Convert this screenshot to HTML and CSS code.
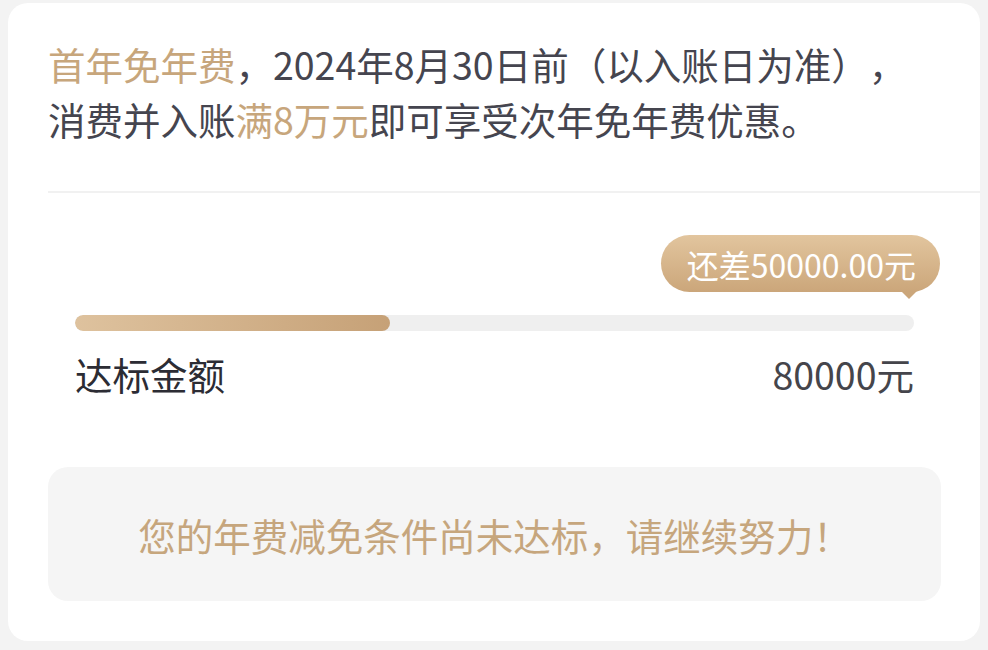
FILE: index.html
```html
<!DOCTYPE html>
<html lang="zh-CN">
<head>
<meta charset="utf-8">
<link rel="stylesheet" href="styles.css">
</head>
<body>
<div class="card">
  <div class="intro">
    <p class="intro-text"><span class="gold">首年免年费</span>，2024年8月30日前（以入账日为准），<br>消费并入账<span class="gold">满8万元</span>即可享受次年免年费优惠。</p>
  </div>
  <div class="progress">
    <div class="tip-row">
      <div class="tip">还差50000.00元</div>
    </div>
    <div class="track"><div class="fill" style="width:37.5%"></div></div>
    <div class="amount-row">
      <span class="label">达标金额</span>
      <span class="value">80000元</span>
    </div>
  </div>
  <div class="notice">您的年费减免条件尚未达标，请继续努力！</div>
</div>
</body>
</html>
```

FILE: styles.css
```css
* { box-sizing: border-box; }
html, body { margin: 0; padding: 0; }
body {
  background: #f3f3f3;
  font-family: "Noto Sans CJK SC", "Noto Sans", sans-serif;
  text-spacing-trim: space-all;
  width: 988px;
  height: 650px;
  padding: 3px 8px 0 8px;
}
.card {
  background: #ffffff;
  border-radius: 20px;
  width: 972px;
  height: 638px;
  padding-bottom: 40px;
  display: flex;
  flex-direction: column;
}
.intro {
  margin-left: 40px;
  padding-top: 33px;
  padding-bottom: 45px;
  border-bottom: 2px solid #f1f1f1;
}
.intro-text {
  margin: 0;
  font-size: 37.5px;
  line-height: 55px;
  color: #45454f;
}
.gold { color: #c7a67c; }
.progress {
  padding: 42px 66px 0 67px;
}
.tip-row {
  display: flex;
  justify-content: flex-end;
  margin-right: -26px;
}
.tip {
  position: relative;
  height: 57px;
  padding: 0 24px 0 26px;
  border-radius: 29px;
  background: linear-gradient(180deg, #e2c59e 0%, #cba67a 100%);
  color: #ffffff;
  font-size: 32px;
  display: flex;
  align-items: center;
}
.tip::after {
  content: "";
  position: absolute;
  right: 23px;
  bottom: -7px;
  border-left: 8px solid transparent;
  border-right: 8px solid transparent;
  border-top: 8px solid #cba67a;
}
.track {
  margin-top: 23px;
  height: 16px;
  border-radius: 8px;
  background: #efefef;
  overflow: hidden;
}
.fill {
  height: 100%;
  border-radius: 8px;
  background: linear-gradient(90deg, #dec29e 0%, #c6a177 100%);
}
.amount-row {
  margin-top: 23px;
  display: flex;
  justify-content: space-between;
  align-items: center;
  font-size: 37.5px;
  line-height: 40px;
}
.label { color: #2c2c34; }
.value { color: #45454b; }
.notice {
  margin: 73px 39px 0 40px;
  height: 134px;
  border-radius: 20px;
  background: #f5f5f5;
  color: #c6a67d;
  font-size: 37.5px;
  display: flex;
  align-items: center;
  justify-content: center;
}
```
